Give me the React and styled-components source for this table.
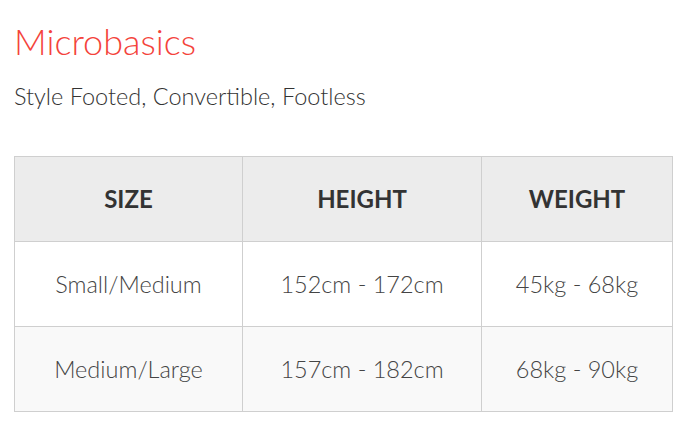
import React from 'react';
import styled, { createGlobalStyle } from 'styled-components';

const GlobalStyle = createGlobalStyle`
  body {
    margin: 0;
    background: #fff;
    font-family: Lato, "Open Sans", sans-serif;
  }
`;

const Page = styled.div`
  padding: 0 21px 0 14px;
`;

const Title = styled.h2`
  margin: 0;
  padding-top: 20px;
  font-size: 36px;
  font-weight: 300;
  line-height: 43px;
  color: #f4433b;
`;

const Subtitle = styled.p`
  margin: 18px 0 0;
  font-size: 23.5px;
  font-weight: 300;
  line-height: 31px;
  color: #333;
`;

const Table = styled.table`
  margin-top: 44px;
  width: 100%;
  table-layout: fixed;
  border-collapse: collapse;
  border: 1px solid #cfcfcf;
`;

const Col = styled.col`
  width: ${(p) => p.$w || 'auto'};
`;

const HeadCell = styled.th`
  height: 82px;
  padding: 0 0 2px;
  background: #ececec;
  border: 1px solid #cfcfcf;
  font-size: 24px;
  font-weight: 700;
  color: #333;
  text-align: center;
`;

const Row = styled.tr`
  background: ${(p) => (p.$alt ? '#f9f9f9' : '#fff')};
`;

const Cell = styled.td`
  height: 83px;
  padding: 0 0 1px;
  border: 1px solid #cfcfcf;
  font-size: 23.5px;
  font-weight: 300;
  color: #444;
  text-align: center;
`;

const rows = [
  ['Small/Medium', '152cm - 172cm', '45kg - 68kg'],
  ['Medium/Large', '157cm - 182cm', '68kg - 90kg'],
];

const App = () => (
  <>
    <GlobalStyle />
    <Page>
      <Title>Microbasics</Title>
      <Subtitle>Style Footed, Convertible, Footless</Subtitle>
      <Table>
        <colgroup>
          <Col $w="228px" />
          <Col $w="239px" />
          <Col />
        </colgroup>
        <thead>
          <tr>
            <HeadCell>SIZE</HeadCell>
            <HeadCell>HEIGHT</HeadCell>
            <HeadCell>WEIGHT</HeadCell>
          </tr>
        </thead>
        <tbody>
          {rows.map((r, i) => (
            <Row key={r[0]} $alt={i % 2 === 1}>
              {r.map((c) => (
                <Cell key={c}>{c}</Cell>
              ))}
            </Row>
          ))}
        </tbody>
      </Table>
    </Page>
  </>
);

export default App;
